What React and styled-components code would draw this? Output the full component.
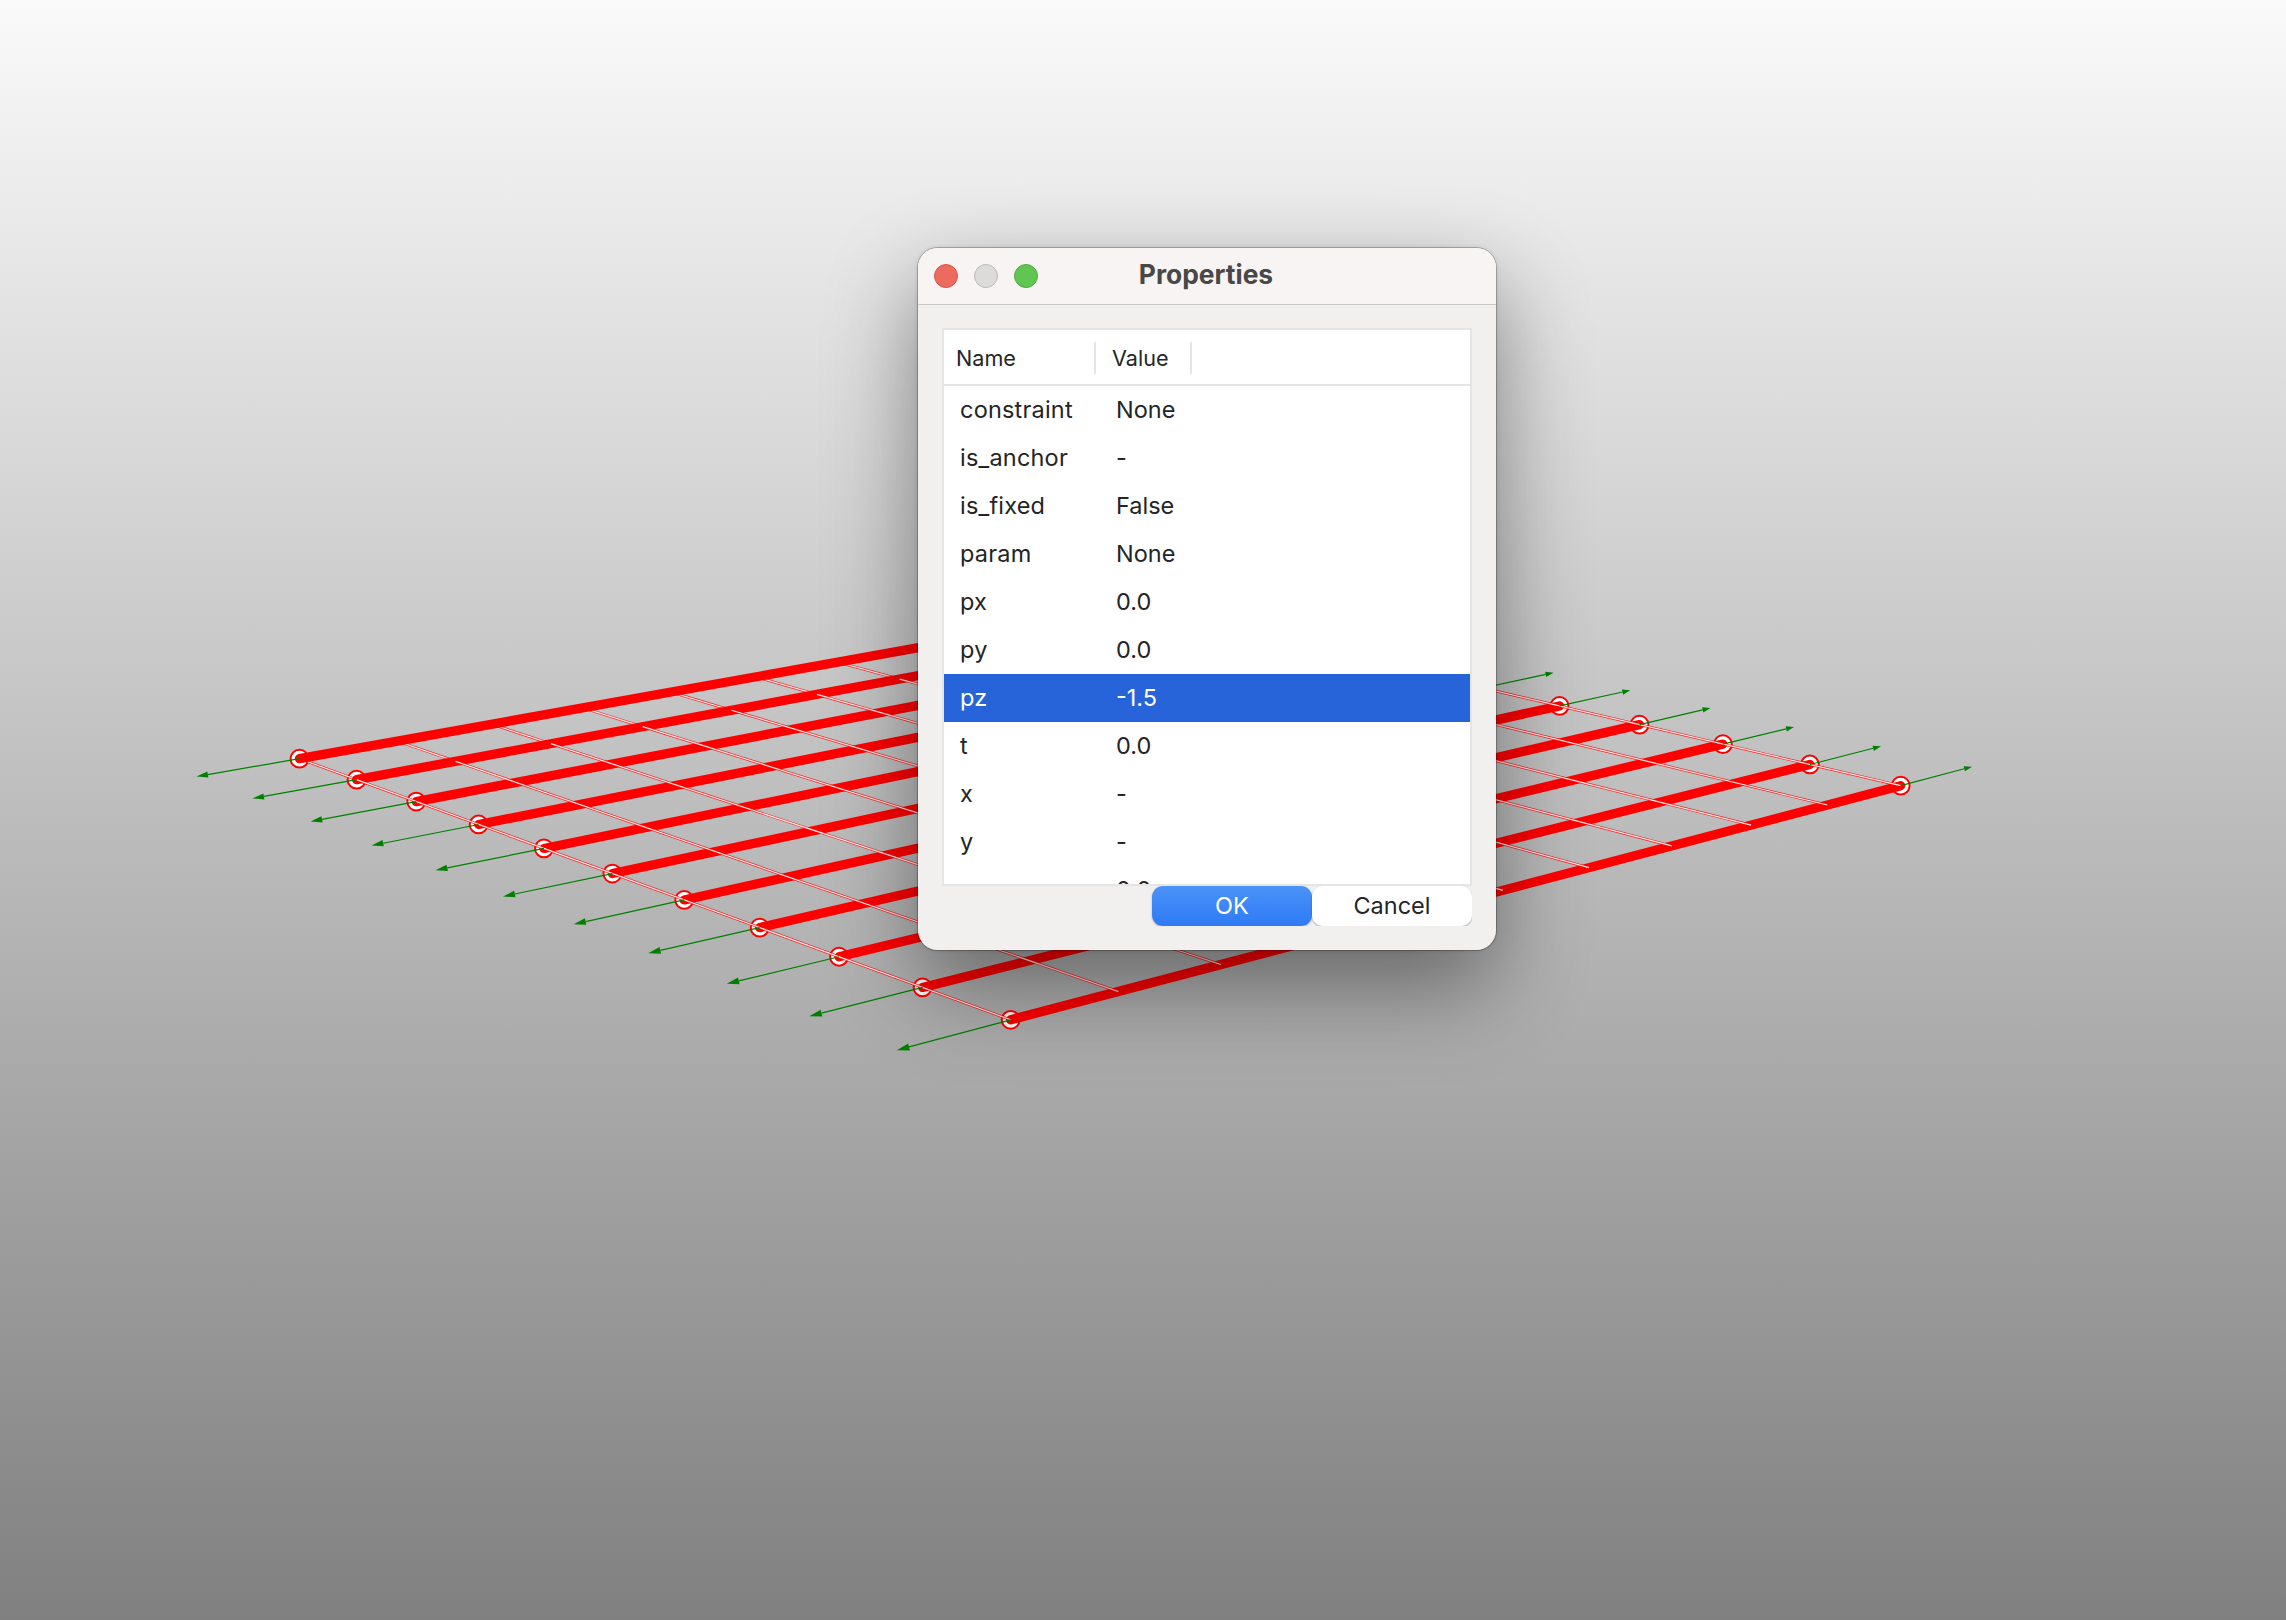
import React from "react";
import styled, { createGlobalStyle } from "styled-components";

const Global = createGlobalStyle`
  html, body { margin: 0; padding: 0; }
  body { width: 2286px; height: 1620px; overflow: hidden; font-family: Inter, "Liberation Sans", sans-serif; }
`;

const Viewport = styled.main`
  position: relative;
  width: 2286px;
  height: 1620px;
  overflow: hidden;
  background: linear-gradient(#fafafa, #808080);
`;

const Scene = styled.svg`
  display: block;
  width: 2286px;
  height: 1620px;
`;

const DialogFrame = styled.div`
  position: absolute;
  left: 918px;
  top: 248px;
  width: 578px;
  height: 702px;
  border-radius: 20px;
  box-shadow: 0 0 0 1px rgba(0, 0, 0, 0.2), 0 0 4px rgba(0, 0, 0, 0.18), 0 36px 90px rgba(0, 0, 0, 0.43);
`;

const Dialog = styled.section`
  width: 578px;
  height: 702px;
  display: flex;
  flex-direction: column;
  border-radius: 20px;
  background: #f2f0ee;
  overflow: hidden;
`;

const TitleBar = styled.header`
  flex: none;
  display: grid;
  grid-template-columns: 120px 1fr 122px;
  align-items: center;
  height: 56px;
  background: #f8f4f3;
  border-bottom: 1px solid #cbc9c8;
`;

const Lights = styled.div`
  display: flex;
  gap: 16px;
  padding-left: 16px;
`;

const Light = styled.span`
  width: 24px;
  height: 24px;
  flex: none;
  box-sizing: border-box;
  border-radius: 50%;
  background: ${(p) => p.$fill};
  border: 1px solid ${(p) => p.$edge};
`;

const Title = styled.h1`
  margin: 0;
  padding-bottom: 4px;
  text-align: center;
  font-size: 26.4px;
  line-height: 32px;
  font-weight: 700;
  color: #4a4847;
`;

const Body = styled.div`
  flex: 1;
  padding: 23px 24px 24px;
  display: flex;
  flex-direction: column;
`;

const Table = styled.div`
  box-sizing: border-box;
  height: 558px;
  border: 2px solid #e5e5e5;
  background: #fff;
  overflow: hidden;
`;

const HeadRow = styled.div`
  display: flex;
  align-items: center;
  height: 54px;
  border-bottom: 2px solid #e5e5e5;
`;

const HeadCell = styled.div`
  box-sizing: border-box;
  position: relative;
  top: 1px;
  width: ${(p) => p.$width}px;
  height: 32px;
  padding-left: ${(p) => p.$pad}px;
  border-right: 2px solid #e5e5e5;
  font-size: 21.6px;
  line-height: 32px;
  color: #262626;
`;

const Row = styled.div`
  display: grid;
  grid-template-columns: 156px 1fr;
  height: 48px;
  padding-left: 16px;
  font-size: 23.5px;
  font-weight: 430;
  line-height: 48px;
  color: ${(p) => (p.$selected ? "#fff" : "#242424")};
  background: ${(p) => (p.$selected ? "#2864d9" : "transparent")};
`;

const Cell = styled.span`
  white-space: nowrap;
  letter-spacing: ${(p) => (p.$name ? "0.2px" : "0")};
`;

const Actions = styled.div`
  display: flex;
  justify-content: flex-end;
  height: 40px;
  overflow: hidden;
`;

const Button = styled.button`
  width: 160px;
  height: 40px;
  padding: 0;
  border: 0;
  border-radius: 11px;
  font: 430 23.5px/38px Inter, "Liberation Sans", sans-serif;
  color: ${(p) => (p.$primary ? "#fff" : "#242424")};
  background: ${(p) => (p.$primary ? "linear-gradient(#4a93f8, #2f7af6)" : "#fff")};
  box-shadow: 0 1px 2px rgba(0, 0, 0, 0.3);
`;

const properties = [
  ["constraint", "None"],
  ["is_anchor", "-"],
  ["is_fixed", "False"],
  ["param", "None"],
  ["px", "0.0"],
  ["py", "0.0"],
  ["pz", "-1.5"],
  ["t", "0.0"],
  ["x", "-"],
  ["y", "-"],
  ["", "0.0"],
];

// Perspective mapping of the unit square onto the ground plane quad.
const quad = [[299.5, 758.7], [1140.3, 607.9], [1900.7, 785.7], [1010.7, 1019.8]];
const project = (() => {
  const [[x0, y0], [x1, y1], [x2, y2], [x3, y3]] = quad;
  const dx1 = x1 - x2, dx2 = x3 - x2, dx3 = x0 - x1 + x2 - x3;
  const dy1 = y1 - y2, dy2 = y3 - y2, dy3 = y0 - y1 + y2 - y3;
  const det = dx1 * dy2 - dx2 * dy1;
  const g = (dx3 * dy2 - dx2 * dy3) / det;
  const h = (dx1 * dy3 - dx3 * dy1) / det;
  const a = x1 - x0 + g * x1, b = x3 - x0 + h * x3;
  const d = y1 - y0 + g * y1, e = y3 - y0 + h * y3;
  return (u, v) => {
    const w = g * u + h * v + 1;
    return [(a * u + b * v + x0) / w, (d * u + e * v + y0) / w];
  };
})();

const steps = Array.from({ length: 11 }, (_, i) => i / 10);

const leftTips = [
  [196.5, 776.5], [252.5, 798.5], [310.5, 821.5], [371.5, 845.5], [435.5, 870.3], [503, 896.5],
  [573.7, 924.2], [648.3, 953.2], [726.7, 983.8], [809.3, 1016.2], [896.8, 1050.2],
];
const rightTips = { 5: [1553.5, 672.7], 6: [1630.3, 690.3], 7: [1710.5, 708], 8: [1794, 727], 9: [1881, 746.3], 10: [1972, 766.7] };

function Arrow({ from, to, head, half }) {
  const dx = to[0] - from[0], dy = to[1] - from[1];
  const len = Math.hypot(dx, dy);
  const ux = dx / len, uy = dy / len;
  const bx = to[0] - ux * head, by = to[1] - uy * head;
  return (
    <g>
      <line x1={from[0]} y1={from[1]} x2={bx} y2={by} stroke="#008000" strokeWidth="1.2" />
      <polygon
        fill="#008000"
        points={`${to[0]},${to[1]} ${bx - uy * half},${by + ux * half} ${bx + uy * half},${by - ux * half}`}
      />
    </g>
  );
}

function Segment({ a, b, ...rest }) {
  return <line x1={a[0]} y1={a[1]} x2={b[0]} y2={b[1]} {...rest} />;
}

function MeshLines({ from, to }) {
  return steps.map((u) => (
    <g key={u}>
      <Segment a={project(u, from)} b={project(u, to)} stroke="#f00" strokeOpacity="0.85" strokeWidth="2.6" />
      <Segment a={project(u, from)} b={project(u, to)} stroke="#fff" strokeOpacity="0.9" strokeWidth="1.2" />
    </g>
  ));
}

function Bars({ rows }) {
  return rows.map((v) => (
    <Segment key={v} a={project(0, v)} b={project(1, v)} stroke="#f00" strokeWidth="9.3" strokeLinecap="round" />
  ));
}

export default function App() {
  return (
    <>
      <Global />
      <Viewport>
        <Scene viewBox="0 0 2286 1620">
          {steps.flatMap((v) => [0, 1].map((u) => {
            const [cx, cy] = project(u, v);
            return <circle key={`${u}-${v}`} cx={cx} cy={cy} r="8.9" fill="#fff" stroke="#f00" strokeWidth="2" />;
          }))}
          <Bars rows={steps.slice(2)} />
          <MeshLines from={0} to={0.1} />
          <Bars rows={steps.slice(0, 2)} />
          <MeshLines from={0.1} to={1} />
          {leftTips.map((tip, i) => (
            <Arrow key={i} from={project(0, i / 10)} to={tip} head={11.5 + i * 0.12} half={3 + i * 0.06} />
          ))}
          {Object.entries(rightTips).map(([i, tip]) => (
            <Arrow key={i} from={project(1, i / 10)} to={tip} head={8} half={2.7} />
          ))}
        </Scene>
        <DialogFrame>
          <Dialog>
            <TitleBar>
              <Lights>
                <Light $fill="#ed6a5e" $edge="#dc5448" />
                <Light $fill="#dddbda" $edge="#bcbab9" />
                <Light $fill="#61c554" $edge="#4fab40" />
              </Lights>
              <Title>Properties</Title>
            </TitleBar>
            <Body>
              <Table>
                <HeadRow>
                  <HeadCell $width={152} $pad={12}>Name</HeadCell>
                  <HeadCell $width={96} $pad={16}>Value</HeadCell>
                </HeadRow>
                {properties.map(([name, value], i) => (
                  <Row key={i} $selected={name === "pz"}>
                    <Cell $name>{name}</Cell>
                    <Cell>{value}</Cell>
                  </Row>
                ))}
              </Table>
              <Actions>
                <Button $primary>OK</Button>
                <Button>Cancel</Button>
              </Actions>
            </Body>
          </Dialog>
        </DialogFrame>
      </Viewport>
    </>
  );
}
